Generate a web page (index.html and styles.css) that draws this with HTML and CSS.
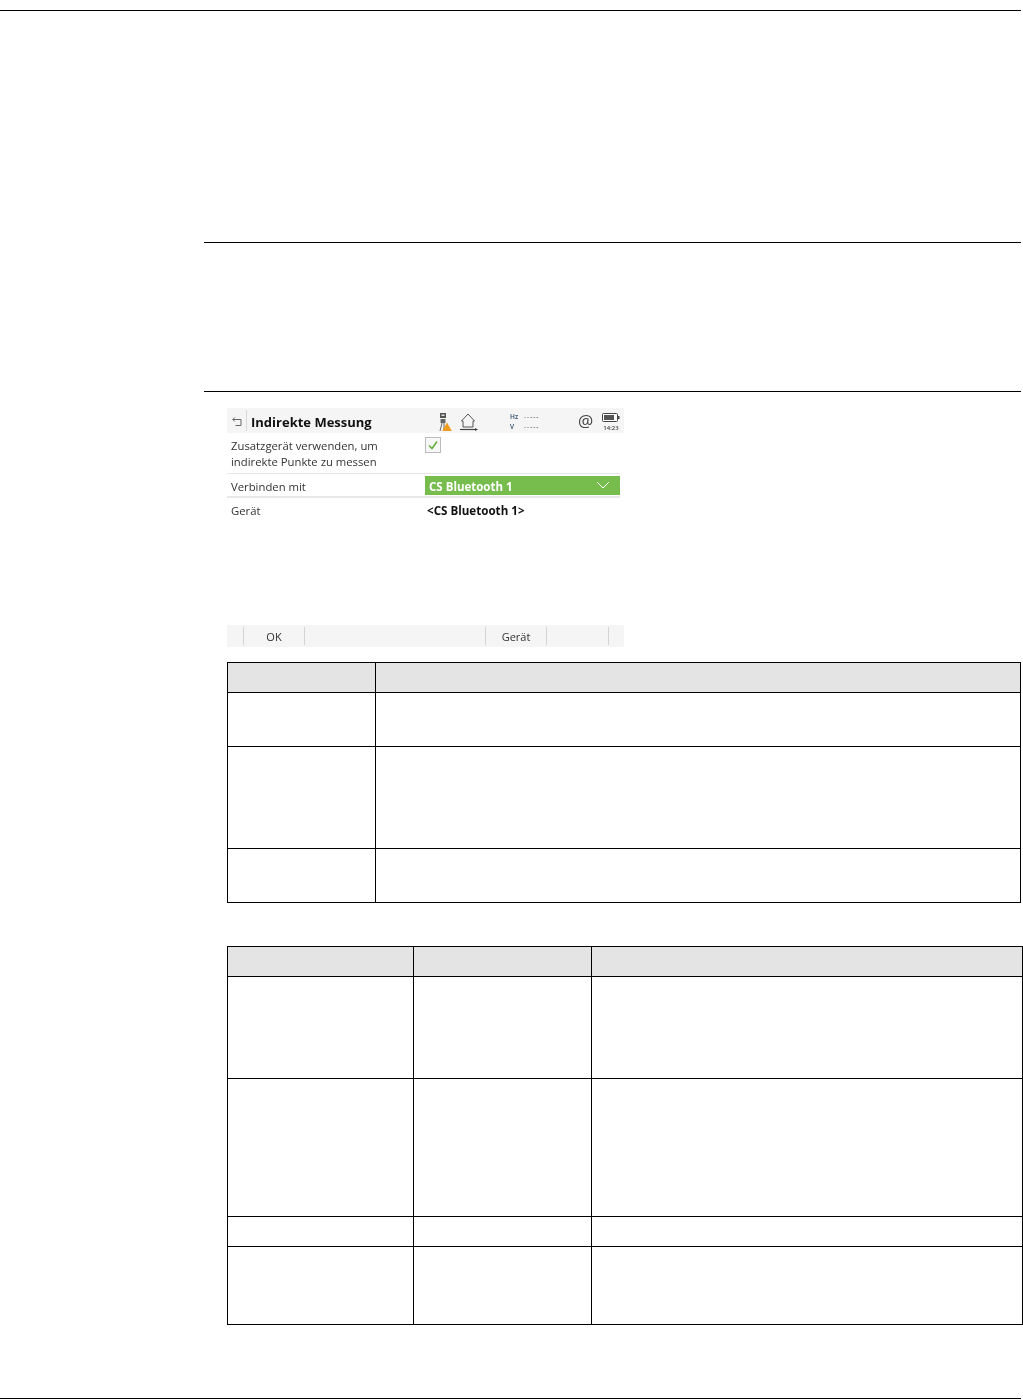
FILE: index.html
```html
<!DOCTYPE html>
<html lang="de">
<head>
<meta charset="utf-8">
<title>Indirekte Messung</title>
<link rel="stylesheet" href="styles.css">
</head>
<body>
<div class="page">
  <hr class="rule rule-top">
  <hr class="rule rule-sec1">
  <hr class="rule rule-sec2">
  <section class="content">
    <div class="screen">
      <div class="titlebar">
        <svg class="ic-back" viewBox="0 0 10 9"><path d="M.8 2.500h8.200v6H3.500M.8 2.500L2.800.5M.8 2.500l2 2" fill="none" stroke="#666" stroke-width="1"/></svg>
        <span class="bar-sep"></span>
        <span class="title">Indirekte Messung</span>
        <svg class="ic-inst" viewBox="0 0 13 18"><rect x="1" y="0" width="6" height="5" fill="#555"/><rect x="2.500" y="1.500" width="3" height="1.500" fill="#ddd"/><rect x="1.500" y="6" width="5" height="4" fill="#666"/><path d="M3 10l-2 8M5 10v8" stroke="#666" fill="none"/><path d="M8 9.500l4.800 8.500H3.200z" fill="#f09a20"/></svg>
        <svg class="ic-home" viewBox="0 0 18 18"><path d="M1.500 8L8 1l6.500 7h-1.500v6H3v-6z" fill="none" stroke="#555"/><path d="M0 16.500h16" stroke="#444" stroke-width="1.200"/><path d="M15 15l3 1.500-3 1.500z" fill="#444"/></svg>
        <div class="angles">
          <div class="angle"><span class="angle-k">Hz</span><span class="angle-v">-----</span></div>
          <div class="angle"><span class="angle-k">V</span><span class="angle-v">-----</span></div>
        </div>
        <span class="at">@</span>
        <div class="batt">
          <svg class="ic-batt" viewBox="0 0 18 9"><rect x=".5" y=".5" width="15" height="8" rx="1" fill="#fff" stroke="#444"/><rect x="2" y="2" width="10" height="5" fill="#555"/><path d="M16 3h1.500v3H16z" fill="#444"/></svg>
          <span class="clock">14:23</span>
        </div>
      </div>
      <div class="form-row row-tall">
        <div class="label">Zusatzgerät verwenden, um<br>indirekte Punkte zu messen</div>
        <div class="value"><span class="check"><svg viewBox="0 0 14 14"><path d="M3 7.500l3 3 5-7" fill="none" stroke="#62ad3c" stroke-width="1.500"/></svg></span></div>
      </div>
      <div class="form-row row-select">
        <div class="label">Verbinden mit</div>
        <div class="value select"><span>CS Bluetooth 1</span><svg class="chev" viewBox="0 0 14 8"><path d="M1 1l6 6 6-6" fill="none" stroke="#fff" stroke-width="1"/></svg></div>
      </div>
      <div class="form-row row-last">
        <div class="label">Gerät</div>
        <div class="value strong">&lt;CS Bluetooth 1&gt;</div>
      </div>
      <div class="softkeys">
        <span class="key key-first"></span>
        <span class="key key-ok">OK</span>
        <span class="key key-gap"></span>
        <span class="key key-dev">Gerät</span>
        <span class="key key-empty"></span>
        <span class="key-end"></span>
      </div>
    </div>
    <div class="table table-a">
      <div class="cell head"></div><div class="cell head"></div>
      <div class="cell r1"></div><div class="cell r1"></div>
      <div class="cell r2"></div><div class="cell r2"></div>
      <div class="cell r3"></div><div class="cell r3"></div>
    </div>
    <div class="table table-b">
      <div class="cell head"></div><div class="cell head"></div><div class="cell head"></div>
      <div class="cell b1"></div><div class="cell b1"></div><div class="cell b1"></div>
      <div class="cell b2"></div><div class="cell b2"></div><div class="cell b2"></div>
      <div class="cell b3"></div><div class="cell b3"></div><div class="cell b3"></div>
      <div class="cell b4"></div><div class="cell b4"></div><div class="cell b4"></div>
    </div>
  </section>
  <hr class="rule rule-bottom">
</div>
</body>
</html>
```
FILE: styles.css
```css
* { box-sizing: border-box; }
html, body { margin: 0; padding: 0; background: #fff; }
body { font-family: "Open Sans", "Noto Sans", sans-serif; color: #222; }
.page { width: 1023px; height: 1400px; padding-top: 10px; display: flex; flex-direction: column; overflow: hidden; }
.rule { border: 0; height: 1px; background: #000; margin: 0; flex: none; }
.rule-top { width: 1021px; }
.rule-sec1 { width: 817px; margin: 231px 0 0 204px; }
.rule-sec2 { width: 817px; margin: 148px 0 0 204px; }
.rule-bottom { width: 1021px; margin-top: 73px; }
.content { margin: 16px 0 0 227px; display: flex; flex-direction: column; }
.screen { width: 397px; height: 239px; display: flex; flex-direction: column; position: relative; filter: blur(.3px); }
.titlebar { height: 25px; background: #f5f5f5; display: flex; align-items: center; position: relative; flex: none; }
.ic-back { width: 10px; height: 9px; margin: 1px 0 0 5px; }
.bar-sep { width: 1px; height: 21px; background: #d8d8d8; margin-left: 4px; }
.title { font-weight: 700; font-size: 13px; margin: 2px 0 0 4px; width: 188px; color: #111; white-space: nowrap; }
.ic-inst { width: 13px; height: 18px; margin-top: 3px; }
.ic-home { width: 18px; height: 18px; margin: 3px 0 0 8px; }
.angles { margin: 0 0 0 32px; width: 68px; font-size: 6.500px; line-height: 10px; color: #2a4a6a; font-weight: 600; padding-top: 3px; }
.angle { display: flex; }
.angle-k { width: 14px; }
.angle-v { letter-spacing: 1px; color: #666; }
.at { font-size: 17px; color: #444; line-height: 20px; width: 24px; margin-top: 1px; }
.batt { display: flex; flex-direction: column; align-items: center; width: 18px; padding-top: 3px; }
.ic-batt { width: 18px; height: 9px; display: block; }
.clock { font-size: 6px; line-height: 8px; font-weight: 600; color: #444; margin-top: 2px; }
.form-row { width: 393px; display: flex; font-size: 11.300px; line-height: 16px; color: #333; flex: none; }
.label { width: 198px; padding-left: 4px; }
.value { flex: 1; }
.row-tall { height: 41px; padding-top: 5px; border-bottom: 1px solid #e6e6e6; }
.row-select { height: 24px; align-items: center; border-bottom: 2px solid #e8e8e8; }
.row-last { height: 24px; align-items: center; }
.check { width: 16px; height: 16px; display: block; border: 1px solid #bbb; background: #f7f7f7; margin-top: -1px; }
.check svg { display: block; width: 14px; height: 14px; }
.select { flex: none; width: 195px; height: 19px; background: #77bd4d; color: #fff; font-weight: 700; font-size: 11.500px; line-height: 14px; padding: 4px 10px 0 4px; display: flex; align-items: center; justify-content: space-between; }
.chev { width: 14px; height: 8px; margin-top: -5px; }
.strong { font-weight: 700; font-size: 11.600px; color: #111; padding: 2px 0 0 2px; }
.row-select .label { margin-top: 4px; }
.row-last .label { margin-top: 1px; }
.softkeys { margin-top: auto; height: 22px; background: #f5f5f5; display: flex; align-items: center; font-size: 11px; color: #333; flex: none; }
.key { height: 18px; line-height: 20px; text-align: center; border-right: 1px solid #d4d4d4; flex: none; }
.key-first { width: 17px; }
.key-ok { width: 61px; }
.key-gap { width: 181px; }
.key-dev { width: 61px; }
.key-empty { width: 62px; }
.table { display: grid; border-top: 1px solid #000; border-left: 1px solid #000; flex: none; }
.table-a { width: 794px; margin-top: 15px; grid-template-columns: 148px 1fr; grid-template-rows: 30px 54px 102px 54px; }
.table-b { width: 796px; margin-top: 43px; grid-template-columns: 186px 178px 1fr; grid-template-rows: 30px 102px 138px 30px 78px; }
.cell { border-right: 1px solid #000; border-bottom: 1px solid #000; background: #fff; }
.head { background: #e4e4e4; }
```
